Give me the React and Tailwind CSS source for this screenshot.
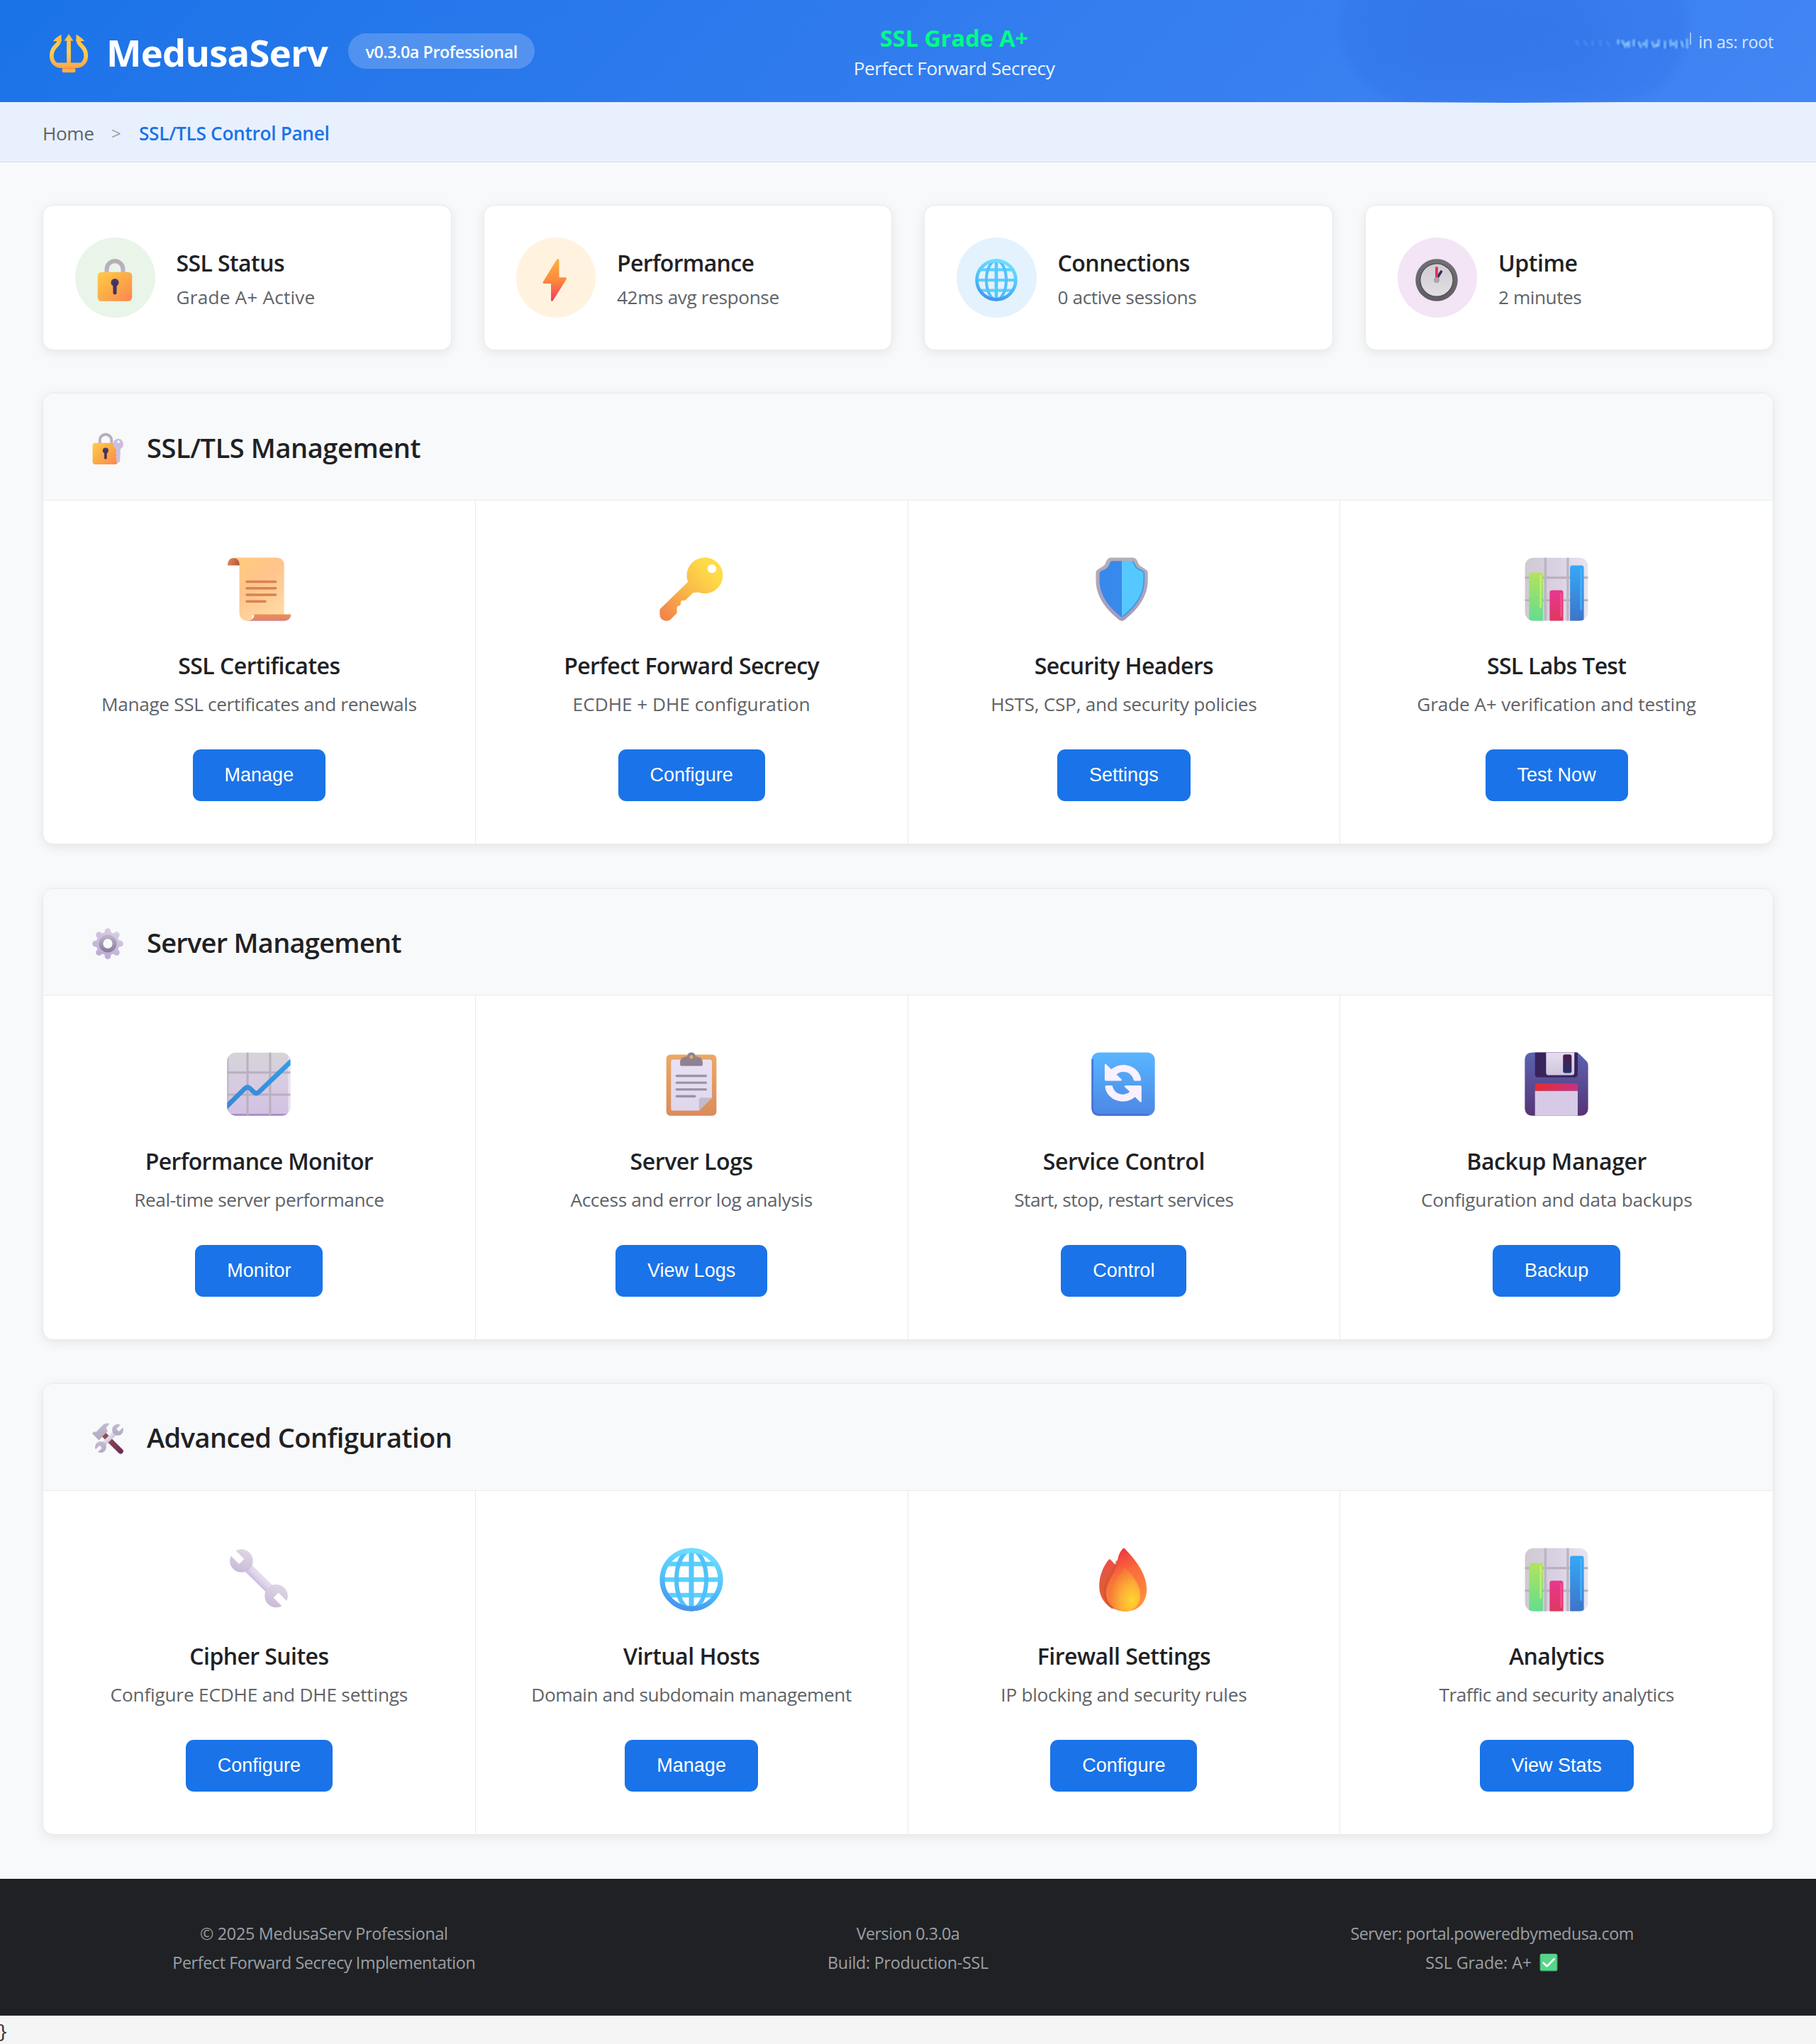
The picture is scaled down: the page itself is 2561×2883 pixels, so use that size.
import React from "react";

function Grad({ id, from, mid, to, x1 = 0, y1 = 0, x2 = 0, y2 = 1 }) {
  return (
    <linearGradient id={id} x1={x1} y1={y1} x2={x2} y2={y2}>
      <stop offset="0" stopColor={from} />
      {mid && <stop offset="0.5" stopColor={mid} />}
      <stop offset="1" stopColor={to} />
    </linearGradient>
  );
}

function Icon({ className, children }) {
  return (
    <svg viewBox="0 0 32 32" className={`block shrink-0 ${className}`} aria-hidden="true">
      {children}
    </svg>
  );
}

function Trident({ className }) {
  return (
    <Icon className={className}>
      <defs>
        <linearGradient id="trident" gradientUnits="userSpaceOnUse" x1="0" y1="2" x2="0" y2="30">
          <stop offset="0" stopColor="#ffb84a" />
          <stop offset="0.45" stopColor="#ffcf4d" />
          <stop offset="1" stopColor="#ff9a4a" />
        </linearGradient>
      </defs>
      <g fill="none" stroke="url(#trident)" strokeWidth="3">
        <path d="M9.2 6C9.2 10.6 3.5 11 3.5 17.8C3.5 22.4 6.6 25.4 11 25.4H21C25.4 25.4 28.5 22.4 28.5 17.8C28.5 11 22.8 10.6 22.8 6" />
        <path d="M16 6V25.6" />
      </g>
      <path
        fill="url(#trident)"
        d="M16 2L19.3 7H12.7ZM10.6 2.4V7.2H4.6C4.6 6.6 8 3.6 10.6 2.4ZM21.4 2.4V7.2H27.4C27.4 6.6 24 3.6 21.4 2.4ZM7 23H25L21 26.9H11Z"
      />
      <rect x="11.2" y="26.8" width="9.6" height="3.2" rx="0.8" fill="#ffb04a" />
      <path d="M11.2 27.2H20.8" stroke="#e8843c" strokeWidth="0.5" />
    </Icon>
  );
}

function Lock({ className }) {
  return (
    <Icon className={className}>
      <defs>
        <Grad id="lockBody" from="#ffcb48" mid="#fbab47" to="#ff8452" x2={1} />
        <Grad id="lockShackle" from="#b3b0b4" to="#c3acd4" />
      </defs>
      <path d="M10.6 12V8.8A5.4 5.4 0 0 1 21.4 8.8V12" fill="none" stroke="url(#lockShackle)" strokeWidth="2.8" />
      <rect x="4.6" y="10.7" width="22.8" height="19.3" rx="2.6" fill="url(#lockBody)" />
      <circle cx="16" cy="17.6" r="2.6" fill="#4b3a68" />
      <path d="M16 18V24.3" stroke="#453060" strokeWidth="2.4" strokeLinecap="round" />
    </Icon>
  );
}

function LockKey({ className }) {
  return (
    <Icon className={className}>
      <defs>
        <Grad id="lkBody" from="#ffcb48" mid="#fbab47" to="#ff8452" x2={1} />
        <Grad id="lkShackle" from="#b3b0b4" to="#c3acd4" />
      </defs>
      <path d="M8.8 12V8.3A5.3 5.3 0 0 1 19.4 8.3V12" fill="none" stroke="url(#lkShackle)" strokeWidth="2.6" />
      <rect x="2.3" y="10.7" width="22.6" height="19.3" rx="2.4" fill="url(#lkBody)" />
      <circle cx="14" cy="17.6" r="2.6" fill="#4b3a68" />
      <path d="M14 18V24.3" stroke="#453060" strokeWidth="2.3" strokeLinecap="round" />
      <path
        d="M25.4 6.8A5 5 0 0 1 27.4 16.2L27 27.4Q25.3 29.6 23.7 27.4V24.5L22.8 23.5L23.7 22.4V20.6L22.8 19.4L23.7 18.2V16.3A5 5 0 0 1 25.4 6.8Z"
        fill="#cbbfe0"
      />
      <circle cx="25.6" cy="9.7" r="1.2" fill="#f8f9fa" />
    </Icon>
  );
}

function Bolt({ className }) {
  return (
    <Icon className={className}>
      <defs>
        <Grad id="bolt" from="#fbb03f" mid="#ff8a3c" to="#ee3a63" />
      </defs>
      <path
        d="M17 2.4Q18.6 1.4 18.6 3V14.2H22.6Q23.9 14.3 23.4 15.5L14.5 29.6Q13.2 30.8 13.2 29V18.3H8.6Q7.4 18.2 8 17Z"
        fill="url(#bolt)"
      />
    </Icon>
  );
}

function Globe({ className }) {
  return (
    <Icon className={className}>
      <defs>
        <linearGradient id="globe" gradientUnits="userSpaceOnUse" x1="19" y1="2" x2="11" y2="30">
          <stop offset="0" stopColor="#6fe0ff" />
          <stop offset="0.55" stopColor="#4fc0fc" />
          <stop offset="1" stopColor="#4390ea" />
        </linearGradient>
      </defs>
      <g fill="none">
        <path d="M4.5 9.1H27.5M3 16H29M4.5 22.9H27.5" stroke="#5cd0fe" strokeWidth="2" />
        <path d="M16 3V29" stroke="#55c8fd" strokeWidth="2.2" />
        <ellipse cx="16" cy="16" rx="6.6" ry="13" stroke="#52c1fb" strokeWidth="1.9" />
        <circle cx="16" cy="16" r="12.9" stroke="url(#globe)" strokeWidth="2.2" />
      </g>
    </Icon>
  );
}

function Clock({ className }) {
  return (
    <Icon className={className}>
      <defs>
        <Grad id="clockRim" from="#737176" to="#5f5d62" />
        <Grad id="clockFace" from="#cfcdd2" to="#e2dfe4" />
      </defs>
      <circle cx="16" cy="16" r="14" fill="url(#clockRim)" />
      <circle cx="16" cy="16" r="10.9" fill="url(#clockFace)" stroke="#4d4b50" strokeWidth="0.6" />
      <path d="M16.4 14.6L19 10.4" stroke="#43275c" strokeWidth="1.7" strokeLinecap="round" />
      <path d="M16 15V8" stroke="#e0325c" strokeWidth="1.8" strokeLinecap="round" />
      <circle cx="16" cy="16" r="1.9" fill="#a8a5ad" />
    </Icon>
  );
}

function Scroll({ className }) {
  return (
    <Icon className={className}>
      <defs>
        <Grad id="scrollPage" from="#ffcb7c" mid="#ffc48c" to="#ffd8a2" x2={0.6} />
        <Grad id="scrollFoot" from="#e8924f" to="#dd7f7c" />
        <Grad id="scrollCurl" from="#e58a58" to="#b95c3e" x2={1} y2={0.3} />
      </defs>
      <path d="M4.9 2H24A3.2 3.2 0 0 1 27.2 5.2V27.6H13V30H10.7A3.3 3.3 0 0 1 7.4 26.7V5.4C7.4 3.4 6.4 2.2 4.9 2Z" fill="url(#scrollPage)" />
      <path d="M2.2 5.5C2.2 3.3 3.3 2.2 4.8 2.2C6.6 2.2 7.5 3.6 7.5 5.5Z" fill="url(#scrollCurl)" />
      <path d="M14 27.1H30.2C30.2 29 28.8 30 27 30H10.7C12.6 30 14 29 14 27.1Z" fill="url(#scrollFoot)" />
      <path d="M10.7 12.7H23.4M10.7 15.6H23.4M10.7 18.5H23.4M10.7 21.4H18.8" stroke="#d9834f" strokeWidth="1.15" strokeLinecap="round" />
    </Icon>
  );
}

function Key({ className }) {
  return (
    <Icon className={className}>
      <defs>
        <linearGradient id="key" gradientUnits="userSpaceOnUse" x1="25" y1="8" x2="4" y2="28">
          <stop offset="0" stopColor="#ffdb48" />
          <stop offset="0.45" stopColor="#f9bb49" />
          <stop offset="1" stopColor="#f2864a" />
        </linearGradient>
      </defs>
      <path
        fillRule="evenodd"
        fill="url(#key)"
        d="M21.9 2A7.95 7.95 0 1 1 19.2 17.4L16.8 17.6L13.6 20.7Q13.2 21.1 12.5 21L11.8 21Q11.2 21.2 11.3 22L11.2 22.8Q11.1 23.3 10.4 23.4Q9.6 23.5 9.6 24.2V26.2Q9.6 26.7 9.2 27L6.8 29.4Q6.2 30 5.2 30H4.6Q2 29.6 2 27V25.6Q2 24.8 2.6 24.3L14.5 12.8A7.95 7.95 0 0 1 21.9 2ZM25.1 5A1.95 1.95 0 1 0 25.1 8.9A1.95 1.95 0 1 0 25.1 5Z"
      />
    </Icon>
  );
}

function Shield({ className }) {
  return (
    <Icon className={className}>
      <defs>
        <Grad id="shieldRim" from="#b5afb8" to="#a99abb" />
      </defs>
      <path
        d="M10.6 2H20.2C21.8 2 22.2 3.4 22.8 4.8C23.6 6.6 26.9 6.8 26.9 8.8V12C26.9 20.8 20.4 26.4 17 29.3Q15.4 30.7 13.8 29.3C10.4 26.4 3.9 20.8 3.9 12V8.8C3.9 6.8 7.2 6.6 8 4.8C8.6 3.4 9 2 10.6 2Z"
        fill="url(#shieldRim)"
      />
      <path d="M15.4 3.5H10.8C10 4 9.9 5.4 9 6.4C8 7.6 5.5 7.6 5.5 9V12C5.5 20 11.4 25.4 15.4 28.5Z" fill="#3889ec" />
      <path d="M15.4 3.5H20C20.8 4 20.9 5.4 21.8 6.4C22.8 7.6 25.3 7.6 25.3 9V12C25.3 20 19.4 25.4 15.4 28.5Z" fill="#55c8ff" />
      <path d="M20.2 3.7C20.8 4.2 20.9 5.4 21.8 6.4C22.8 7.6 25.2 7.6 25.2 9V12C25.2 19.5 19.8 25 15.6 28.2" fill="none" stroke="#3f9be8" strokeWidth="0.6" />
    </Icon>
  );
}

function BarChart({ className }) {
  return (
    <Icon className={className}>
      <defs>
        <Grad id="bcBg" from="#cfcad2" mid="#d9d1e3" to="#eae4ef" x2={1} y2={0} />
        <Grad id="bcG" from="#b3e35c" to="#63dd92" />
        <Grad id="bcP" from="#ec3590" to="#dd385f" />
        <Grad id="bcB" from="#35a8f8" to="#3d74c8" />
        <clipPath id="bcClip">
          <rect x="2" y="2" width="28" height="28" rx="4" />
        </clipPath>
      </defs>
      <g clipPath="url(#bcClip)">
        <rect x="2" y="2" width="28" height="28" fill="url(#bcBg)" />
        <path d="M2 10.9H30M2 20.9H30" stroke="#b7b0ba" strokeWidth="0.9" />
        <path d="M11.1 2V30M21 2V30" stroke="#bcb6c2" strokeWidth="1.1" />
        <path d="M3.9 30V9.6Q3.9 8.6 4.9 8.6H9Q10 8.6 10 9.6V30Z" fill="url(#bcG)" />
        <path d="M9 10V24" stroke="#c9f56e" strokeWidth="0.8" strokeLinecap="round" opacity="0.8" />
        <path d="M13 30V17.5Q13 16.5 14 16.5H18Q19 16.5 19 17.5V30Z" fill="url(#bcP)" />
        <path d="M18 18V28" stroke="#f8558c" strokeWidth="0.8" strokeLinecap="round" opacity="0.8" />
        <path d="M22 30V6.5Q22 5.5 23 5.5H27.1Q28.1 5.5 28.1 6.5V30Z" fill="url(#bcB)" />
        <path d="M26.9 7V25" stroke="#4bb5fb" strokeWidth="0.9" strokeLinecap="round" opacity="0.8" />
      </g>
    </Icon>
  );
}

function Gear({ className }) {
  return (
    <Icon className={className}>
      <defs>
        <linearGradient id="gear" gradientUnits="userSpaceOnUse" x1="22" y1="2" x2="10" y2="30">
          <stop offset="0" stopColor="#d9d1e6" />
          <stop offset="1" stopColor="#b8a6d6" />
        </linearGradient>
        <Grad id="gearRing" from="#b9b0c0" to="#8d809c" />
      </defs>
      <g stroke="url(#gear)" fill="none">
        <path
          d="M16.01 4.8L15.99 27.2M4.8 16.01L27.2 15.99M8.1 8.1L23.9 23.9M23.9 8.1L8.1 23.9"
          strokeWidth="5.6"
          strokeLinecap="round"
        />
        <circle cx="16" cy="16" r="8" strokeWidth="5" />
      </g>
      <circle cx="16" cy="16" r="6.1" fill="#f8f9fa" stroke="url(#gearRing)" strokeWidth="3.7" />
    </Icon>
  );
}

function LineChart({ className }) {
  return (
    <Icon className={className}>
      <defs>
        <Grad id="lcBg" from="#d6d3d8" mid="#d6cce2" to="#d3c0e2" />
        <Grad id="lcLine" from="#2f9fe8" to="#3c86d4" />
        <clipPath id="lcClip">
          <rect x="2" y="2" width="28" height="28" rx="4" />
        </clipPath>
      </defs>
      <g clipPath="url(#lcClip)">
        <rect x="2" y="2" width="28" height="28" fill="url(#lcBg)" />
        <path d="M2 29.7H30" stroke="#ab8cc8" strokeWidth="1" />
        <path d="M29.6 2V30" stroke="#ebe4f1" strokeWidth="1.2" />
        <path d="M2.2 2V30" stroke="#b9b0c2" strokeWidth="0.8" />
        <path d="M11 2V30M21 2V30M2 10.9H30M2 20.7H30" stroke="#b8b0bf" strokeWidth="0.95" />
        <path d="M1 26.7L9.8 18Q11 16.9 12.2 18L13.5 19.3Q14.8 20.7 16.1 19.5L31 5.2" fill="none" stroke="url(#lcLine)" strokeWidth="2.1" />
      </g>
    </Icon>
  );
}

function Clipboard({ className }) {
  return (
    <Icon className={className}>
      <defs>
        <Grad id="cbBoard" from="#eba866" to="#da8c5a" />
        <Grad id="cbPaper" from="#e9e2f3" to="#dfd6ec" />
      </defs>
      <rect x="4.9" y="3" width="22.2" height="27" rx="1.8" fill="url(#cbBoard)" />
      <path d="M8 5.2H24.1Q25.1 5.2 25.1 6.2V22L19.4 27.8H8Q7 27.8 7 26.8V6.2Q7 5.2 8 5.2Z" fill="url(#cbPaper)" />
      <path d="M25.1 22H20.4Q19.4 22 19.4 23V27.8Z" fill="#c3bacb" />
      <path
        fillRule="evenodd"
        d="M14.2 3.8C14.2 2.6 15 2 16 2S17.8 2.6 17.8 3.8C19.8 3.9 21 4.8 21 6.4V7.4Q21 8 20.4 8H11.6Q11 8 11 7.4V6.4C11 4.8 12.2 3.9 14.2 3.8ZM16 3.2A0.8 0.8 0 1 0 16 4.8A0.8 0.8 0 1 0 16 3.2Z"
        fill="#8e8292"
      />
      <path d="M9.5 12.4H22.4M9.5 15.4H22.4M9.5 18.4H22.4M9.5 21.4H17.5" stroke="#9b93a6" strokeWidth="1.05" strokeLinecap="round" />
    </Icon>
  );
}

function Refresh({ className }) {
  const arrow =
    "M7.8 7.6Q7.9 6.7 8.6 7.4L10.7 9.5C12.2 8.2 14 7.5 16 7.5C20.3 7.5 23.6 10.5 23.9 14.1Q23.9 14.6 23.4 14.6H21.1Q20.7 14.6 20.6 14.2C20.1 12.1 18.4 10.6 16 10.6C14.9 10.6 13.8 11 13 11.8L15.2 13.9Q15.6 14.6 14.8 14.6H8.4Q7.8 14.6 7.8 14Z";
  return (
    <Icon className={className}>
      <defs>
        <Grad id="rfBg" from="#5ab5ff" mid="#519ff2" to="#4d86e4" />
      </defs>
      <rect x="2" y="2" width="28" height="28" rx="3.4" fill="url(#rfBg)" />
      <path d="M2.4 5V27Q2.6 29.6 5 29.6H27" fill="none" stroke="#4274d6" strokeWidth="0.8" />
      <path d={arrow} fill="#fbf0ff" />
      <path d={arrow} fill="#fbf0ff" transform="rotate(180 15.95 15.6)" />
    </Icon>
  );
}

function Floppy({ className }) {
  return (
    <Icon className={className}>
      <defs>
        <Grad id="fdBody" from="#5b63b2" to="#573474" />
        <Grad id="fdRed" from="#ea2a30" to="#c63282" x2={1} y2={0} />
        <Grad id="fdSlot" from="#4d1b4c" to="#22306a" />
        <Grad id="fdMetal" from="#e6dff0" to="#cfc4de" />
      </defs>
      <path d="M5.5 2H24.4Q25.4 2 26.1 2.7L29.3 5.9Q30 6.6 30 7.6V26.5Q30 30 26.5 30H5.5Q2 30 2 26.5V5.5Q2 2 5.5 2Z" fill="url(#fdBody)" />
      <path d="M6.5 2H25.4V11.6Q25.4 13 24 13H7.9Q6.5 13 6.5 11.6Z" fill="#38235a" />
      <path d="M11.4 2H23.9V11Q23.9 12.1 22.8 12.1H12.5Q11.4 12.1 11.4 11Z" fill="url(#fdMetal)" />
      <rect x="18.9" y="2.9" width="3.8" height="8.2" rx="0.9" fill="url(#fdSlot)" />
      <path d="M6.5 19H25.4V30H6.5Z" fill="#d7cae6" />
      <path d="M6.5 19V17Q6.5 15.8 7.7 15.8H24.2Q25.4 15.8 25.4 17V19Z" fill="url(#fdRed)" />
    </Icon>
  );
}

function WrenchShape({ id }) {
  return (
    <g>
      <defs>
        <linearGradient id={`${id}Fill`} gradientUnits="userSpaceOnUse" x1="17.6" y1="13.8" x2="14.4" y2="17">
          <stop offset="0" stopColor="#e4e0ee" />
          <stop offset="0.5" stopColor="#ddd5ea" />
          <stop offset="1" stopColor="#cab9e2" />
        </linearGradient>
        <linearGradient id={`${id}Head`} x1="0.8" y1="0" x2="0.4" y2="1">
          <stop offset="0" stopColor="#dfd9e4" />
          <stop offset="1" stopColor="#c9bad8" />
        </linearGradient>
        <mask id={`${id}Cut`} maskUnits="userSpaceOnUse" x="0" y="0" width="32" height="32">
          <rect width="32" height="32" fill="#fff" />
          <path d="M8.4 8L1.5 1.1M23.6 22.9L30.5 29.8" stroke="#000" strokeWidth="3.2" />
        </mask>
      </defs>
      <g mask={`url(#${id}Cut)`}>
        <path d="M10 9.6L21.8 21.2" stroke={`url(#${id}Fill)`} strokeWidth="4.2" />
        <circle cx="8.3" cy="7.7" r="5.1" fill={`url(#${id}Head)`} />
        <circle cx="23.7" cy="23.2" r="5.1" fill={`url(#${id}Head)`} />
      </g>
    </g>
  );
}

function Wrench({ className }) {
  return (
    <Icon className={className}>
      <WrenchShape id="wrench" />
    </Icon>
  );
}

function Tools({ className }) {
  return (
    <Icon className={className}>
      <defs>
        <Grad id="toolsHandle" from="#8f5550" to="#6f2f58" x2={1} />
        <Grad id="toolsHead" from="#c2bccc" to="#b3a8c6" />
      </defs>
      <path d="M12.5 12.5L27.6 27.4" stroke="url(#toolsHandle)" strokeWidth="4.8" strokeLinecap="round" />
      <path d="M1.8 11.4L3.6 9.8L5.4 10L12 3.4Q14.5 1.6 17.6 2.6L14.6 6.2L15.8 9.6L10.6 14.6L10.2 15.4L8 17.6Z" fill="url(#toolsHead)" />
      <g transform="translate(33.3 0.5) scale(-1 1)">
        <WrenchShape id="tools" />
      </g>
    </Icon>
  );
}

function Flame({ className }) {
  return (
    <Icon className={className}>
      <defs>
        <linearGradient id="flMain" gradientUnits="userSpaceOnUse" x1="14" y1="3" x2="24" y2="26">
          <stop offset="0" stopColor="#ef3640" />
          <stop offset="0.4" stopColor="#fb6b3c" />
          <stop offset="1" stopColor="#ff8f3e" />
        </linearGradient>
        <Grad id="flSide" from="#ee4f48" mid="#dd5c38" to="#f0603c" />
        <radialGradient id="flInner" cx="0.75" cy="0.75" r="0.75">
          <stop offset="0" stopColor="#ffd62e" />
          <stop offset="0.5" stopColor="#fdae36" />
          <stop offset="1" stopColor="#f57738" />
        </radialGradient>
      </defs>
      <path d="M9.4 7.4Q10 6.6 10.6 7.4L12.6 9.6L18 14V30C10 30 5.4 25.4 5.4 18.8C5.4 14 7.4 10 9.4 7.4Z" fill="url(#flSide)" />
      <path d="M15.7 2.4Q16.2 1.6 16.8 2.4C20.8 6.6 26.4 13 26.4 20.2C26.4 26.4 22.4 30 17 30C10.6 30 7.8 25 8.4 20C9 15.4 12.6 11.4 13.6 6.8C14 4.8 14.8 3.4 15.7 2.4Z" fill="url(#flMain)" />
      <path d="M13.4 7.6C12.4 12 9 15.4 8 20C7.4 24 9 27 11.4 28.6" fill="none" stroke="#c9532c" strokeWidth="1.2" opacity="0.6" />
      <path d="M16.2 11.4Q16.8 10.6 17.4 11.4C20.8 14.6 23.5 18.6 23.5 23C23.5 27.4 20.6 30 16.8 30C12.6 30 9.5 27.4 9.5 22.8C9.5 17.6 14.2 14.6 16.2 11.4Z" fill="url(#flInner)" />
    </Icon>
  );
}

function Check({ className }) {
  return (
    <Icon className={className}>
      <rect x="2" y="2" width="28" height="28" rx="3" fill="#57d58b" />
      <path d="M2.6 5V27Q2.6 29.2 5 29.2H27Q29.4 29.2 29.4 27V5" fill="none" stroke="#3fae74" strokeWidth="1.2" />
      <path d="M7.5 16.6L13.2 22.2L24.5 10.6" fill="none" stroke="#fff" strokeWidth="3" strokeLinecap="round" strokeLinejoin="round" />
    </Icon>
  );
}

const stats = [
  { icon: Lock, tint: "bg-[#e8f5e8]", title: "SSL Status", titleCls: "tracking-[-0.59px]", text: "Grade A+ Active", textCls: "tracking-[0.17px]" },
  { icon: Bolt, tint: "bg-[#fff3e0]", title: "Performance", titleCls: "tracking-[-0.67px]", text: "42ms avg response", textCls: "tracking-[-0.4px]" },
  { icon: Globe, tint: "bg-[#e3f2fd]", title: "Connections", titleCls: "tracking-[-0.5px]", text: "0 active sessions", textCls: "tracking-[-0.42px]" },
  { icon: Clock, tint: "bg-[#f3e5f5]", title: "Uptime", titleCls: "tracking-[-0.46px]", text: "2 minutes", textCls: "tracking-[-0.47px]" },
];

const sections = [
  {
    icon: LockKey,
    title: "SSL/TLS Management",
    titleCls: "tracking-[-0.42px]",
    items: [
      { icon: Scroll, title: "SSL Certificates", titleCls: "tracking-[-0.52px]", text: "Manage SSL certificates and renewals", textCls: "tracking-[-0.37px]", action: "Manage" },
      { icon: Key, title: "Perfect Forward Secrecy", titleCls: "tracking-[-0.57px]", text: "ECDHE + DHE configuration", textCls: "tracking-[-0.04px]", action: "Configure" },
      { icon: Shield, title: "Security Headers", titleCls: "tracking-[-0.59px]", text: "HSTS, CSP, and security policies", textCls: "tracking-[-0.28px]", action: "Settings" },
      { icon: BarChart, title: "SSL Labs Test", titleCls: "tracking-[-0.72px]", text: "Grade A+ verification and testing", textCls: "tracking-[-0.18px]", action: "Test Now" },
    ],
  },
  {
    icon: Gear,
    title: "Server Management",
    titleCls: "tracking-[-0.73px]",
    items: [
      { icon: LineChart, title: "Performance Monitor", titleCls: "tracking-[-0.62px]", text: "Real-time server performance", textCls: "tracking-[-0.46px]", action: "Monitor" },
      { icon: Clipboard, title: "Server Logs", titleCls: "tracking-[-0.42px]", text: "Access and error log analysis", textCls: "tracking-[-0.35px]", action: "View Logs" },
      { icon: Refresh, title: "Service Control", titleCls: "tracking-[-0.36px]", text: "Start, stop, restart services", textCls: "tracking-[-0.57px]", action: "Control" },
      { icon: Floppy, title: "Backup Manager", titleCls: "tracking-[-0.4px]", text: "Configuration and data backups", textCls: "tracking-[-0.28px]", action: "Backup" },
    ],
  },
  {
    icon: Tools,
    title: "Advanced Configuration",
    titleCls: "tracking-[-0.53px]",
    items: [
      { icon: Wrench, title: "Cipher Suites", titleCls: "tracking-[-0.57px]", text: "Configure ECDHE and DHE settings", textCls: "tracking-[-0.21px]", action: "Configure" },
      { icon: Globe, title: "Virtual Hosts", titleCls: "tracking-[-0.51px]", text: "Domain and subdomain management", textCls: "tracking-[-0.43px]", action: "Manage" },
      { icon: Flame, title: "Firewall Settings", titleCls: "tracking-[-0.5px]", text: "IP blocking and security rules", textCls: "tracking-[-0.28px]", action: "Configure" },
      { icon: BarChart, title: "Analytics", titleCls: "tracking-[-0.52px]", text: "Traffic and security analytics", textCls: "tracking-[-0.48px]", action: "View Stats" },
    ],
  },
];

function Header() {
  return (
    <header className="relative flex h-[144px] items-center justify-between bg-linear-135 from-[#1a73e8] to-[#4285f4] px-[60px] text-white">
      {/* redaction smudge over the session details */}
      <div className="absolute left-[1880px] top-0 h-[144px] w-[520px] overflow-hidden">
        <div className="absolute -top-[70px] left-[10px] h-[216px] w-[490px] rounded-[110px] bg-[#2f6fe6] opacity-30 blur-[6px]" />
        <div className="absolute -top-[10px] left-[90px] h-[130px] w-[300px] rounded-full bg-[#2c6ce0] opacity-25 blur-[28px]" />
      </div>
      <div className="absolute left-[1975px] top-[144px] h-[1px] w-[310px] bg-linear-to-r from-[#3a7ff0]/0 via-[#3a7ff0] to-[#3a7ff0]/0" />
      <svg viewBox="0 0 180 24" className="absolute left-[2208px] top-[49px] h-[24px] w-[180px] blur-[0.8px]" aria-hidden="true">
        <g fill="none" strokeLinecap="round">
          <path d="M14 8L18 14M26 9L30 15M38 9V15M48 8L50 15M58 10L62 16" stroke="#5c9cf6" strokeWidth="3" opacity="0.5" />
          <path d="M74 8V12M80 9L84 17M89 10V17M96 8V15M103 11L106 17M114 8V17M122 11L125 17M131 8V15M140 10V18M148 8V15M156 9V18M163 10L166 17M171 7V18" stroke="#86c4fb" strokeWidth="3.6" opacity="0.85" />
          <path d="M78 14L81 18M100 10V17M118 12V18M136 11V18M144 11V19M160 9V17M168 9V19" stroke="#1f63d8" strokeWidth="2.4" opacity="0.7" />
          <path d="M86 12V14M110 12V14M128 14V16M152 12V14" stroke="#cfeaff" strokeWidth="2.6" opacity="0.8" />
        </g>
      </svg>
      <div className="flex items-center">
        <Trident className="ml-[6px] mt-[6px] size-[62px]" />
        <span className="ml-[22px] mt-[4px] text-[52.5px] font-bold leading-[72px] tracking-[-0.76px]">MedusaServ</span>
        <span className="ml-[29px] flex h-[50px] w-[263px] items-center justify-center rounded-full bg-white/20 pt-[2px] text-[23.3px] font-semibold tracking-[-0.45px]">
          v0.3.0a Professional
        </span>
      </div>
      <div className="mt-[5px] flex w-[284px] flex-col items-center whitespace-nowrap">
        <span className="text-[32.4px] font-bold leading-[43px] text-[#00ff88]">SSL Grade A+</span>
        <span className="text-[26.25px] leading-[42px] tracking-[-0.5px] text-white/90">Perfect Forward Secrecy</span>
      </div>
      <div className="relative mb-[27px] flex w-[564px] justify-end gap-[10px] text-[23.3px] leading-[36px] tracking-[-0.24px] text-white/80">
        <span className="mt-[5px] h-[17px] w-[2px] self-start bg-white/50" />
        <span>in as: root</span>
      </div>
    </header>
  );
}

function Breadcrumb() {
  return (
    <nav className="flex h-[85px] items-center border-b border-[#dadce0] bg-[#e8f0fe] px-[60px] pt-[3px] text-[26.25px] leading-[42px]">
      <span className="w-[97px] tracking-[-0.4px] text-[#5f6368]">Home</span>
      <span className="w-[39px] text-[24px] text-[#9aa0a6]">&gt;</span>
      <span className="font-semibold tracking-[-0.33px] text-[#1a73e8]">SSL/TLS Control Panel</span>
    </nav>
  );
}

function StatCard({ icon: StatIcon, tint, title, titleCls, text, textCls }) {
  return (
    <div className="flex h-[205px] items-center rounded-[15px] border border-[#e8eaed] bg-white px-[45px] shadow-[0_3.75px_15px_rgba(0,0,0,0.08)]">
      <div className={`flex size-[112.5px] items-center justify-center rounded-full ${tint}`}>
        <StatIcon className="-ml-[1px] mt-[7px] size-[68px]" />
      </div>
      <div className="ml-[30px] mt-[4px] flex flex-col">
        <span className={`text-[32px] font-semibold leading-[50px] text-[#202124] ${titleCls}`}>{title}</span>
        <span className={`text-[26.25px] leading-[46px] text-[#5f6368] ${textCls}`}>{text}</span>
      </div>
    </div>
  );
}

function Item({ icon: ItemIcon, title, titleCls, text, textCls, action }) {
  return (
    <div className="flex flex-col items-center border-r border-[#e8eaed] pt-[74.2px] last:border-r-0">
      <ItemIcon className="-ml-[1px] size-[102px]" />
      <span className={`mt-[32.4px] text-[32px] font-semibold leading-[50px] text-[#202124] ${titleCls}`}>{title}</span>
      <span className={`mt-[6px] whitespace-nowrap text-[26.25px] leading-[46px] text-[#5f6368] ${textCls}`}>{text}</span>
      <button className="mt-[40.8px] h-[73px] rounded-[11.25px] bg-[#1a73e8] px-[45px] font-['Liberation_Sans',Arial,sans-serif] text-[27px] leading-[31px] text-white">
        {action}
      </button>
    </div>
  );
}

function Section({ icon: SectionIcon, title, titleCls, items }) {
  return (
    <section className="flex h-[637px] flex-col overflow-hidden rounded-[15px] border border-[#e8eaed] bg-white shadow-[0_3.75px_15px_rgba(0,0,0,0.08)]">
      <div className="flex h-[150.4px] shrink-0 items-center border-b border-[#e8eaed] bg-[#f8f9fa] pl-[66px]">
        <SectionIcon className="mt-[5px] size-[50px]" />
        <h2 className={`ml-[30px] mt-[1px] text-[38px] font-semibold leading-[60px] text-[#202124] ${titleCls}`}>{title}</h2>
      </div>
      <div className="grid flex-1 grid-cols-4">
        {items.map((item) => (
          <Item key={item.title} {...item} />
        ))}
      </div>
    </section>
  );
}

function Footer() {
  return (
    <footer className="grid h-[193px] grid-cols-3 items-center gap-[30px] bg-[#202124] px-[60px] pt-[3px] text-center text-[23.3px] leading-[41px] text-[#9aa0a6]">
      <div>
        <p className="tracking-[-0.28px]">© 2025 MedusaServ Professional</p>
        <p className="tracking-[-0.39px]">Perfect Forward Secrecy Implementation</p>
      </div>
      <div>
        <p className="tracking-[-0.53px]">Version 0.3.0a</p>
        <p className="tracking-[-0.27px]">Build: Production-SSL</p>
      </div>
      <div>
        <p className="tracking-[-0.46px]">Server: portal.poweredbymedusa.com</p>
        <p className="flex items-center justify-center gap-[10px] tracking-[-0.07px]">
          SSL Grade: A+
          <Check className="size-[28px]" />
        </p>
      </div>
    </footer>
  );
}

export default function App() {
  return (
    <div className="h-[2883px] w-[2561px] overflow-hidden bg-[#f5f5f5] font-['Open_Sans','Noto_Sans',sans-serif]">
      <Header />
      <Breadcrumb />
      <main className="bg-[#f8f9fa] px-[60px] pb-[61.8px] pt-[60px]">
        <div className="grid grid-cols-4 gap-[45px]">
          {stats.map((stat) => (
            <StatCard key={stat.title} {...stat} />
          ))}
        </div>
        <div className="mt-[60.4px] flex flex-col gap-[61.4px]">
          {sections.map((section) => (
            <Section key={section.title} {...section} />
          ))}
        </div>
      </main>
      <Footer />
      <p className="-ml-px text-[28px] leading-[42px] text-[#333333]">{"}"}</p>
    </div>
  );
}
